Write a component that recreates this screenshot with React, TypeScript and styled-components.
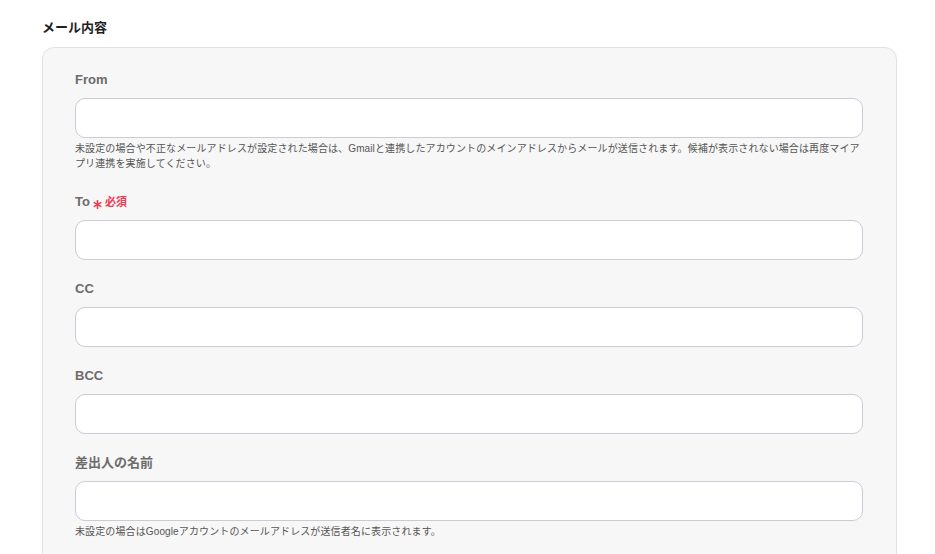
import styled, { createGlobalStyle } from "styled-components";

const GlobalStyle = createGlobalStyle`
  * {
    box-sizing: border-box;
  }
  body {
    margin: 0;
    background-color: #ffffff;
    color: #222;
    font-family: "Liberation Sans", "Noto Sans CJK JP", sans-serif;
  }
`;

interface Field {
  label: string;
  required?: boolean;
  help?: string;
}

const fields: Field[] = [
  {
    label: "From",
    help: "未設定の場合や不正なメールアドレスが設定された場合は、Gmailと連携したアカウントのメインアドレスからメールが送信されます。候補が表示されない場合は再度マイアプリ連携を実施してください。",
  },
  { label: "To", required: true },
  { label: "CC" },
  { label: "BCC" },
  {
    label: "差出人の名前",
    help: "未設定の場合はGoogleアカウントのメールアドレスが送信者名に表示されます。",
  },
];

// 必須マーク（6本線のアスタリスク）
const Asterisk = () => (
  <svg width="9" height="9" viewBox="0 0 10 10" aria-hidden="true">
    <g stroke="currentColor" strokeWidth="1.8" strokeLinecap="round">
      <line x1="5" y1="0.8" x2="5" y2="9.2" />
      <line x1="1.4" y1="2.9" x2="8.6" y2="7.1" />
      <line x1="1.4" y1="7.1" x2="8.6" y2="2.9" />
    </g>
  </svg>
);

export default function App() {
  return (
    <>
      <GlobalStyle />
      <Page>
        <SectionTitle>メール内容</SectionTitle>
        <Panel>
          {fields.map((field) => (
            <FieldBlock key={field.label}>
              <Label>
                {field.label}
                {field.required && (
                  <Required>
                    <Mark>
                      <Asterisk />
                    </Mark>
                    必須
                  </Required>
                )}
              </Label>
              <Input type="text" />
              {field.help && <Help>{field.help}</Help>}
            </FieldBlock>
          ))}
        </Panel>
      </Page>
    </>
  );
}

const Page = styled.div`
  padding: 18px 38px 0 42px;
`;

const SectionTitle = styled.h2`
  margin: 0 0 9px 0;
  font-size: 13px;
  line-height: 20px;
  font-weight: 700;
  color: #1f1f1f;
`;

const Panel = styled.div`
  background-color: #f7f7f7;
  border: 1px solid #e2e2e2;
  border-radius: 12px;
  padding: 22px 33px 40px 32px;
  display: flex;
  flex-direction: column;
  gap: 19px;
  min-height: 560px;
`;

const FieldBlock = styled.div`
  display: flex;
  flex-direction: column;
`;

const Label = styled.label`
  display: flex;
  align-items: center;
  height: 20px;
  font-size: 13px;
  line-height: 20px;
  font-weight: 700;
  color: #6b6b6b;
  margin-bottom: 8px;
`;

const Required = styled.span`
  display: inline-flex;
  align-items: center;
  height: 20px;
  margin-left: 3px;
  font-size: 11px;
  line-height: 20px;
  font-weight: 700;
  color: #ef3a52;
`;

const Mark = styled.span`
  display: inline-flex;
  margin-right: 3px;
  margin-top: 4px;
`;

const Input = styled.input`
  height: 40px;
  width: 100%;
  background-color: #ffffff;
  border: 1px solid #c9ccd5;
  border-radius: 10px;
  padding: 0 12px;
  font-size: 13px;
  outline: none;
`;

const Help = styled.p`
  margin: 3px 0 2px 0;
  font-size: 10px;
  line-height: 15px;
  letter-spacing: 0.12px;
  color: #555;
`;
